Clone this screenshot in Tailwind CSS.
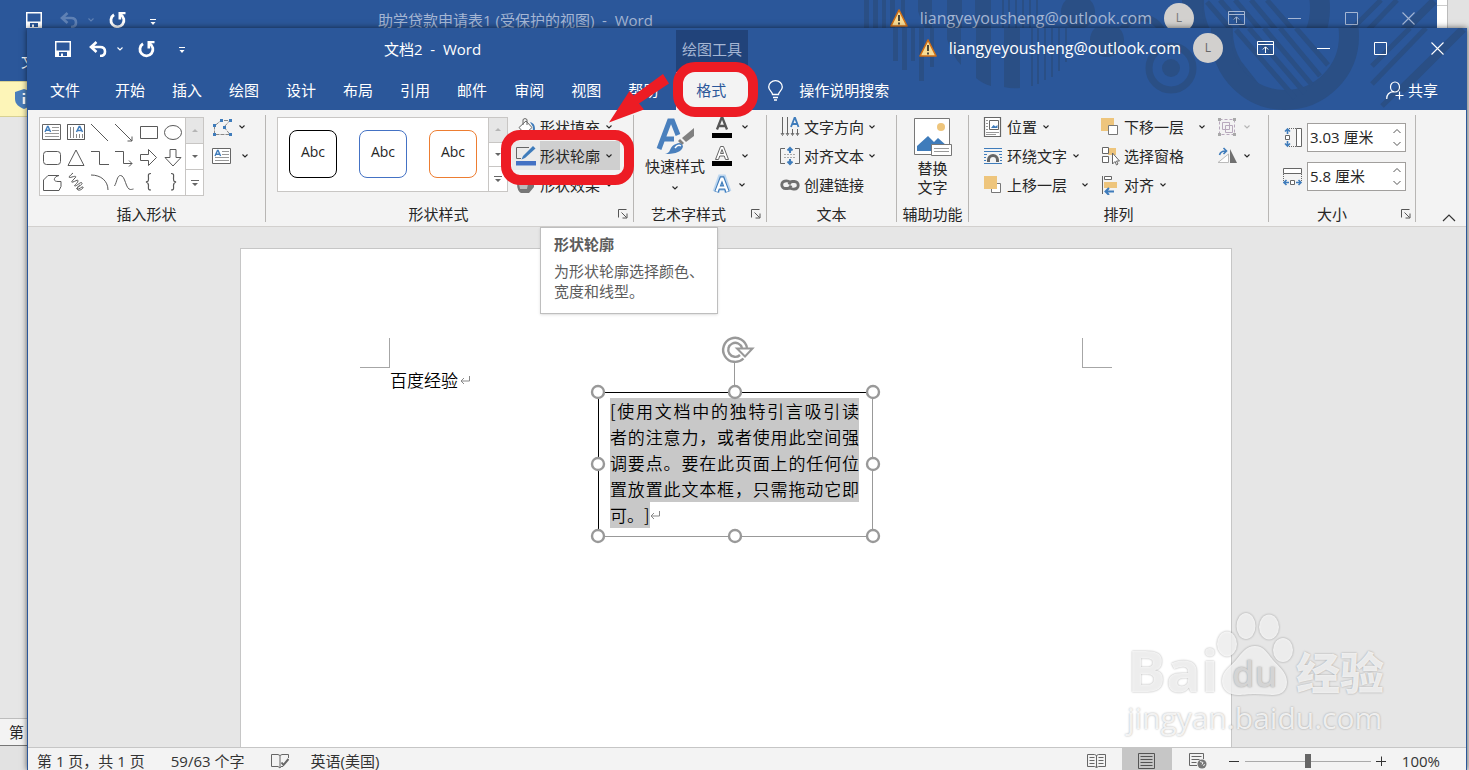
<!DOCTYPE html>
<html lang="zh-CN">
<head>
    <meta charset="utf-8">
    <title>文档2 - Word</title>
    <script src="https://cdn.jsdelivr.net/npm/@tailwindcss/browser@4"></script>
</head>
<body class="relative h-screen overflow-hidden bg-[#e2e2e2] font-['Open_Sans','Noto_Sans_CJK_SC',sans-serif] text-[15px] leading-5 text-[#262626]">

    <!-- shared icons -->
    <svg class="hidden">
        <symbol id="caret" viewBox="0 0 8 6"><path d="M1.500 1.500L4 4l2.500-2.500" fill="none" stroke="currentColor" stroke-width="1.100"/></symbol>
        <symbol id="save" viewBox="0 0 16 16"><path d="M0 0h16v16H0zM1.500 1.500v8h13v-8zM4 11v4h2v-2.500h2V15h4v-4z" fill="currentColor" fill-rule="evenodd"/></symbol>
        <symbol id="undo" viewBox="0 0 18 16"><path d="M7.500 1L2 6l5.500 5M2.500 6H11c3.500 0 5 2 5 4.500S14.500 15 11 15" fill="none" stroke="currentColor" stroke-width="2.600"/></symbol>
        <symbol id="redo" viewBox="0 0 17 17"><path d="M5 2.800A6.500 6.500 0 1 0 11.500 2.600" fill="none" stroke="currentColor" stroke-width="2.800"/><path d="M9.500 0H16.500V2.200H12.200V7.500H9.500z" fill="currentColor"/></symbol>
        <symbol id="qat" viewBox="0 0 7 7"><path d="M0 0h6v1H0zM.5 3h5L3 6z" fill="currentColor"/></symbol>
        <symbol id="warn" viewBox="0 0 18 18"><path d="M9 1L17 17H1z" fill="#f8dc95" stroke="#cf6f17" stroke-width="1.600" stroke-linejoin="round"/><path d="M9 6v6M9 13.500v2" stroke="#222" stroke-width="1.600"/></symbol>
        <symbol id="ribbonopt" viewBox="0 0 17 14"><path d="M.5.5h16v13H.5zM.5 3.500h16M8.500 12V6M5.800 8.500l2.700-2.700 2.700 2.700" fill="none" stroke="currentColor"/></symbol>
        <symbol id="min" viewBox="0 0 13 13"><path d="M0 6.500h13" stroke="currentColor"/></symbol>
        <symbol id="max" viewBox="0 0 13 13"><path d="M.5.5h12v12H.5z" fill="none" stroke="currentColor"/></symbol>
        <symbol id="close" viewBox="0 0 13 13"><path d="M.5.5l12 12M12.500.5l-12 12" stroke="currentColor" stroke-width="1.100"/></symbol>
        <symbol id="launcher" viewBox="0 0 10 10"><path d="M.5 8.500v-8h8M3.500 3.500l5 5M9 4.500v4.500H4.500" fill="none" stroke="#555"/></symbol>
        <symbol id="textbox" viewBox="0 0 20 20"><path d="M.5 2.500h18v15H.5z" fill="#fff" stroke="#666"/><path d="M10 5.500h7M10 8.500h7M3 11.500h14M3 14.500h14" stroke="#999"/><path d="M3 10L5.500 4.500h.6L8.600 10M4 8.300h3.700" fill="none" stroke="#3f7cbb" stroke-width="1.400"/></symbol>
        <symbol id="pattern" viewBox="866 28 600 82">
            <g fill="#2a4f85">
                <path d="M893 28h5v33h-5zM902 28h5v42h-5zM911 28h4v33h-4zM919 28h5v53h-5zM930 28h4v39h-4z"/>
                <path d="M947 28h14v37q-9-9-14-26zM976 28h15v58q-8-2-15-8zM1004 28h16v60q-8 1-16-1zM1031 28h2v58h-2zM1037 28h2v56h-2zM1044 28h2v52h-2zM1051 28h2v49h-2zM1058 28h2v43h-2zM1065 28h2v34h-2z"/>
                <circle cx="1107" cy="40" r="17"/>
                <circle cx="1171" cy="68" r="9"/>
                <path d="M1211 28h22q-1 18 8 33l36 46q-40-4-58-39-9-19-8-40z"/>
            </g>
            <circle cx="1171" cy="68" r="22" fill="none" stroke="#2a4f85" stroke-width="7"/>
            <circle cx="1285" cy="36" r="64" fill="none" stroke="#2a4f85" stroke-width="20"/>
            <path d="M1236 30l59 68M1249 28l56 65M1264 28l48 57M1280 28l40 48M1296 28l32 37M1372 84l54-56M1372 66l38-38M1382 106l80-78M1402 92l62-62" stroke="#2a4f85" stroke-width="5"/>
        </symbol>
    </svg>

    <!-- window behind -->
    <div class="absolute top-0 right-[21px] h-7 w-3 border-r border-[#bbb] bg-white"><div class="mt-[5px] h-px bg-[#ccc]"></div></div>
    <section class="absolute top-0 bottom-6 -left-0.5 right-8 flex flex-col border-b border-[#777] bg-[#e6e6e6]">
        <header class="relative h-[81px] bg-[#2b579a] text-[#a5b6d3]">
            <svg class="absolute top-0 right-0 h-[82px] w-[600px]"><use href="#pattern"/></svg>
            <div class="relative flex h-10 items-center">
                <svg class="ml-7 h-4 w-4 text-white"><use href="#save"/></svg>
                <svg class="ml-[18px] h-4 w-[18px] text-[#5f81b4]"><use href="#undo"/></svg>
                <svg class="ml-[9px] h-1.5 w-2 text-[#5f81b4]"><use href="#caret"/></svg>
                <svg class="ml-3.5 h-[17px] w-[17px] text-white"><use href="#redo"/></svg>
                <svg class="mt-1 ml-6 h-[7px] w-[7px] text-white"><use href="#qat"/></svg>
                <p class="ml-[221px] whitespace-pre">助学贷款申请表1 (受保护的视图)  -  Word</p>
                <div class="ml-auto flex items-center pb-1">
                    <svg class="mr-3 h-[18px] w-[18px]"><use href="#warn"/></svg>
                    <span class="text-base">liangyeyousheng@outlook.com</span>
                    <span class="ml-3 flex h-[30px] w-[30px] items-center justify-center rounded-full bg-[#d2d0ce] text-xs text-[#777]">L</span>
                    <svg class="ml-[34px] h-3.5 w-[17px]"><use href="#ribbonopt"/></svg>
                    <svg class="ml-[43px] h-[13px] w-[13px]"><use href="#min"/></svg>
                    <svg class="ml-11 h-[13px] w-[13px]"><use href="#max"/></svg>
                    <svg class="ml-11 mr-[22px] h-[13px] w-[13px]"><use href="#close"/></svg>
                </div>
            </div>
            <p class="relative mt-[11px] ml-[23px] text-white">文件</p>
        </header>
        <div class="flex h-9 items-center border-y border-[#d8d193] bg-[#fdf5b8] pl-4">
            <svg class="h-5 w-5" viewBox="0 0 20 20"><path d="M10 0l9 3v7c0 5-4 8-9 10-5-2-9-5-9-10V3z" fill="#4a7ebb"/><path d="M10 4v2M10 8v7" stroke="#fff" stroke-width="2.500"/></svg>
        </div>
        <p class="mt-auto h-[27px] border-t border-[#bdbdbd] bg-[#f3f3f3] pt-[3px] pl-[11px]">第</p>
    </section>

    <!-- front window -->
    <main class="absolute top-7 right-0.5 bottom-0 left-[27px] flex flex-col border-x border-[#2b579a] bg-[#e6e6e6] shadow-[0_0_6px_rgba(0,0,0,0.6)]">
        <header class="relative bg-[#2b579a] text-white">
            <svg class="absolute top-0 right-0 h-[82px] w-[600px]"><use href="#pattern"/></svg>
            <div class="relative flex h-11 items-center">
                <button aria-label="保存" class="ml-[27px] pb-0.5"><svg class="h-4 w-4"><use href="#save"/></svg></button>
                <button aria-label="撤消" class="ml-[18px] flex items-center pb-0.5"><svg class="h-4 w-[18px]"><use href="#undo"/></svg><svg class="ml-[9px] h-1.5 w-2"><use href="#caret"/></svg></button>
                <button aria-label="重复" class="ml-3.5 pb-0.5"><svg class="h-[17px] w-[17px]"><use href="#redo"/></svg></button>
                <button aria-label="自定义快速访问工具栏" class="ml-6"><svg class="h-[7px] w-[7px]"><use href="#qat"/></svg></button>
                <h1 class="ml-[198px] w-[292px] pb-0.5 whitespace-pre">文档2  -  Word</h1>
                <p class="mt-0.5 flex h-[42px] w-[72px] items-center justify-center bg-[#21437a] pb-1 text-[#a5b6d3]">绘图工具</p>
                <div class="ml-auto flex items-center pb-1">
                    <svg class="mr-3 h-[18px] w-[18px]"><use href="#warn"/></svg>
                    <span class="text-base">liangyeyousheng@outlook.com</span>
                    <span class="ml-3 flex h-[30px] w-[30px] items-center justify-center rounded-full bg-[#d2d0ce] text-xs text-[#666]">L</span>
                    <button aria-label="功能区显示选项" class="ml-[34px]"><svg class="h-3.5 w-[17px]"><use href="#ribbonopt"/></svg></button>
                    <button aria-label="最小化" class="ml-[43px]"><svg class="h-[13px] w-[13px]"><use href="#min"/></svg></button>
                    <button aria-label="最大化" class="ml-11"><svg class="h-[13px] w-[13px]"><use href="#max"/></svg></button>
                    <button aria-label="关闭" class="ml-11 mr-[22px]"><svg class="h-[13px] w-[13px]"><use href="#close"/></svg></button>
                </div>
            </div>
            <nav class="relative flex h-[38px] items-center [&>*]:h-full [&_button]:pb-0.5">
                <button class="mr-[35px] ml-[22px]">文件</button>
                <div class="flex gap-[27px]">
                    <button>开始</button>
                    <button>插入</button>
                    <button>绘图</button>
                    <button>设计</button>
                    <button>布局</button>
                    <button>引用</button>
                    <button>邮件</button>
                    <button>审阅</button>
                    <button>视图</button>
                    <button>帮助</button>
                </div>
                <button class="ml-[18px] w-[72px] bg-[#f3f3f3] pr-0.5 text-[#2b579a]">格式</button>
                <button class="ml-5 flex items-center gap-4">
                    <svg class="h-[21px] w-[15px]" viewBox="0 0 15 21" fill="none" stroke="currentColor" stroke-width="1.300"><path d="M4.500 14.500c0-3-3.800-4-3.800-7.500a6.800 6.300 0 0 1 13.600 0c0 3.500-3.800 4.500-3.800 7.500zM5 17.500h5M6 20h3"/></svg>
                    操作说明搜索
                </button>
                <button class="mr-7 ml-auto flex items-center gap-1">
                    <svg class="h-[19px] w-[18px]" viewBox="0 0 18 19" fill="none" stroke="currentColor" stroke-width="1.200"><path d="M4.500 6a4.500 5 0 1 1 9 0c0 3-2 5-4.500 5s-4.500-2-4.500-5zM.7 18c0-5 3-7 7-7.300M13.500 10.500v8M9.500 14.500h8"/></svg>
                    共享
                </button>
            </nav>
        </header>

        <!-- ribbon -->
        <div class="relative flex h-[117px] border-b border-[#d2d0ce] bg-[#f3f3f3] pt-0.5">
            <section class="flex w-[237px] flex-col">
                <div class="flex h-[91px] items-start pl-[11px]">
                    <div class="mt-[5px] flex h-[79px] border border-[#c8c6c4] bg-white">
                        <div class="grid w-[145px] grid-cols-6 pt-0.5 text-[#595959] [&>svg]:m-0.5 [&>svg]:h-5 [&>svg]:w-5 [&>svg]:fill-none [&>svg]:stroke-current">
                            <svg><use href="#textbox"/></svg>
                            <svg viewBox="0 0 20 20"><path d="M1.500 2.500h17v15h-17zM4.500 5v11M7.500 5v11M10.500 12v4M13.500 12v4M16.500 12v4" stroke="#888"/><path d="M1.500 2.500h17v15h-17z"/><path d="M10.500 10l2.700-5.500h.6l2.700 5.500M11.500 8.500h4" stroke="#3f7cbb" stroke-width="1.500"/></svg>
                            <svg viewBox="0 0 20 20"><path d="M1 2l17 17"/></svg>
                            <svg viewBox="0 0 20 20"><path d="M1 2l17 17M18 14.500V19h-4.500"/></svg>
                            <svg viewBox="0 0 20 20"><path d="M1.500 4.500h17v12h-17z"/></svg>
                            <svg viewBox="0 0 20 20"><ellipse cx="10" cy="10.500" rx="8.500" ry="7"/></svg>
                            <svg viewBox="0 0 20 20"><rect x="1.500" y="4.500" width="17" height="13" rx="3"/></svg>
                            <svg viewBox="0 0 20 20"><path d="M10 3l8 15.500H2z"/></svg>
                            <svg viewBox="0 0 20 20"><path d="M1 4.500h8.500v13H19"/></svg>
                            <svg viewBox="0 0 20 20"><path d="M1 4.500h8.500v12H18M15 13.500l3 3-3 3"/></svg>
                            <svg viewBox="0 0 20 20"><path d="M1.500 7.500h8v-5l8 8-8 8v-5h-8z"/></svg>
                            <svg viewBox="0 0 20 20"><path d="M7 2.500h6v8h5L10 19l-8-8.500h5z"/></svg>
                            <svg viewBox="0 0 20 20"><path d="M6 3.500h11c-5 1-7 6-1 6h3v5l-2 4H1.500V8z"/></svg>
                            <svg viewBox="0 0 20 20"><path d="M7 1c-6 5-4 5-1 4s5-1 3 1-5 5-2 4 5-3 5-1-5 5-3 5 6-5 7-3-7 5-5 6 5-3 6-2-3 4-5 3 0-4 2-5" /></svg>
                            <svg viewBox="0 0 20 20"><path d="M1 3c10 0 17 6 17 15"/></svg>
                            <svg viewBox="0 0 20 20"><path d="M.5 14C3 10 3 3.500 6.500 3.500c5 0 5 14 10 14 1.500 0 2.500-.5 3-.500"/></svg>
                            <svg viewBox="0 0 20 20"><path d="M12 1.500c-3.500 0-2.500 2-2.500 5s-.5 3-2.500 3.500c2 .5 2.500 1 2.500 3.500s-1 4.500 2.500 4.500" stroke-width="1.200"/></svg>
                            <svg viewBox="0 0 20 20"><path d="M8 1.500c3.500 0 2.500 2 2.500 5s.5 3 2.500 3.500c-2 .5-2.500 1-2.500 3.500s1 4.500-2.500 4.500" stroke-width="1.200"/></svg>
                        </div>
                        <div class="flex w-[18px] flex-col divide-y divide-[#c8c6c4] border-l border-[#c8c6c4] [&>button]:flex [&>button]:flex-1 [&>button]:items-center [&>button]:justify-center">
                            <button aria-label="上一行" class="bg-[#e6e6e6]"><svg class="h-[3px] w-1.5" viewBox="0 0 6 3"><path d="M0 3l3-3 3 3z" fill="#b5b5b5"/></svg></button>
                            <button aria-label="下一行"><svg class="h-[3px] w-1.5" viewBox="0 0 6 3"><path d="M0 0l3 3 3-3z" fill="#666"/></svg></button>
                            <button aria-label="其他形状"><svg class="h-1.5 w-2" viewBox="0 0 8 6"><path d="M0 0h8v1H0zM1 3l3 3 3-3z" fill="#666"/></svg></button>
                        </div>
                    </div>
                    <div class="ml-2 flex flex-col">
                        <button aria-label="编辑形状" class="flex h-[29px] items-center gap-1.5">
                            <svg class="h-5 w-5" viewBox="0 0 20 20"><path d="M2.500 17.500V9L9 3.500h9L12 10l6 7.500z" fill="none" stroke="#888" stroke-dasharray="4 1"/><path d="M8 2h3v3H8zM17 2h3v3h-3zM1 7h3v3H1zM11 9h3v3h-3zM1 16h3v3H1zM17 16h3v3h-3z" fill="#3f7cbb"/></svg>
                            <svg class="h-1.5 w-2"><use href="#caret"/></svg>
                        </button>
                        <button aria-label="文本框" class="flex h-[29px] items-center gap-[9px]">
                            <svg class="h-5 w-5"><use href="#textbox"/></svg>
                            <svg class="h-1.5 w-2"><use href="#caret"/></svg>
                        </button>
                    </div>
                </div>
                <h2 class="text-center leading-[22px]">插入形状</h2>
            </section>
            <div class="mt-[3px] mb-1 w-px bg-[#b8b6b4]"></div>

            <section class="flex w-[367px] flex-col">
                <div class="flex h-[91px] items-start pl-[11px]">
                    <div class="mt-[5px] flex h-[75px] border border-[#c8c6c4] bg-white">
                        <div class="flex items-start gap-[22px] px-[11px] pt-3 [&>button]:h-12 [&>button]:w-12 [&>button]:rounded-lg [&>button]:border [&>button]:pb-1 [&>button]:text-sm">
                            <button class="border-black">Abc</button>
                            <button class="border-[#4472c4]">Abc</button>
                            <button class="border-[#ed7d31]">Abc</button>
                        </div>
                        <div class="flex w-[19px] flex-col divide-y divide-[#c8c6c4] border-l border-[#c8c6c4] [&>button]:flex [&>button]:flex-1 [&>button]:items-center [&>button]:justify-center">
                            <button aria-label="上一行样式" class="bg-[#e6e6e6]"><svg class="h-[3px] w-1.5" viewBox="0 0 6 3"><path d="M0 3l3-3 3 3z" fill="#b5b5b5"/></svg></button>
                            <button aria-label="下一行样式"><svg class="h-[3px] w-1.5" viewBox="0 0 6 3"><path d="M0 0l3 3 3-3z" fill="#666"/></svg></button>
                            <button aria-label="其他样式"><svg class="h-1.5 w-2" viewBox="0 0 8 6"><path d="M0 0h8v1H0zM1 3l3 3 3-3z" fill="#666"/></svg></button>
                        </div>
                    </div>
                    <div class="ml-1 flex flex-col [&>button]:flex [&>button]:h-[29px] [&>button]:w-[108px] [&>button]:items-center">
                        <button>
                            <svg class="mx-1 h-5 w-5" viewBox="0 0 20 20"><path d="M3 10.500L10 4l6 6.500-7 6.500z" fill="#fff" stroke="#666"/><path d="M7 8V2.500q2-2 4 0V8" fill="none" stroke="#666"/><path d="M14 5c4 1 6 4 4.500 11-1.500-1-2-3-1.500-6z" fill="#3f7cbb"/></svg>
                            形状填充<svg class="ml-[5px] h-1.5 w-2"><use href="#caret"/></svg>
                        </button>
                        <button class="bg-[#cfcfcf]">
                            <span class="flex h-full items-center bg-[#ebebeb] px-1"><svg class="h-5 w-5" viewBox="0 0 20 20"><path d="M13 1.500H.5v11H5" fill="none" stroke="#666"/><path d="M17 0l2.500 2.500L9 12l-3.500 1.500L7 10z" fill="#3f7cbb"/><path d="M0 15h20v4.500H0z" fill="#4472c4"/></svg></span>
                            形状轮廓<svg class="ml-[5px] h-1.5 w-2"><use href="#caret"/></svg>
                        </button>
                        <button>
                            <svg class="mx-1 h-5 w-5" viewBox="0 0 20 20"><path d="M2 7l5-4h10l-3 5z" fill="#fff" stroke="#777"/><path d="M1 8h10l7-4v8l-5 6H5q-4-2-4-10z" fill="#777"/><path d="M3 9h9l-1 5H4z" fill="#bbb"/></svg>
                            形状效果<svg class="ml-[5px] h-1.5 w-2"><use href="#caret"/></svg>
                        </button>
                    </div>
                </div>
                <div class="flex items-center pr-[5px] pl-[15px]">
                    <h2 class="flex-1 pr-[22px] text-center leading-[22px]">形状样式</h2>
                    <button aria-label="设置形状格式"><svg class="h-2.5 w-2.5"><use href="#launcher"/></svg></button>
                </div>
            </section>
            <div class="mt-[3px] mb-1 w-px bg-[#b8b6b4]"></div>

            <section class="flex w-[132px] flex-col">
                <div class="flex h-[91px] items-start pl-[11px]">
                    <button class="flex w-[60px] flex-col items-center pt-1">
                        <svg class="h-10 w-10" viewBox="0 0 40 40"><path d="M4 33L14.500 5h3L23 19M9 23h10" fill="none" stroke="#4a80bd" stroke-width="5"/><path d="M39 12v8l-8 6-4-4z" fill="#808080"/><path d="M25 23l4 4-2 2-4-4z" fill="#808080"/><path d="M21 28q5-3 7 2-1 8-18 8 4-1 5-4 2-5 6-6z" fill="#4a80bd"/><path d="M20 32q3-4 6-2" fill="none" stroke="#fff" stroke-width="1.500"/></svg>
                        <span>快速样式</span>
                        <svg class="mt-[9px] h-1.5 w-2"><use href="#caret"/></svg>
                    </button>
                    <div class="ml-[7px] flex flex-col [&>button]:flex [&>button]:h-[29px] [&>button]:items-center">
                        <button aria-label="文本填充" class="gap-[9px]">
                            <svg class="h-[22px] w-5" viewBox="0 0 20 22"><path d="M5 13.500L9.500 2h1L15 13.500M6.500 10h7" fill="none" stroke="#555" stroke-width="2.300"/><path d="M0 17h20v5H0z"/></svg>
                            <svg class="h-1.5 w-2"><use href="#caret"/></svg>
                        </button>
                        <button aria-label="文本轮廓" class="gap-[9px]">
                            <svg class="h-[22px] w-5" viewBox="0 0 20 22"><path d="M3.500 14.500L8.500 1.500h3l5 13h-3l-1.200-3.500H7.700l-1.200 3.500zM8.500 8.500h3L10 4.500z" fill="#fff" stroke="#666"/><path d="M0 16h20v5H0z"/></svg>
                            <svg class="h-1.5 w-2"><use href="#caret"/></svg>
                        </button>
                        <button aria-label="文本效果" class="gap-1.5">
                            <svg class="h-[22px] w-5" viewBox="0 0 20 22"><path d="M4 18L9 4h2l5 14M6 13.500h8" fill="none" stroke="#bcd6ef" stroke-width="7"/><path d="M4.500 18L9.500 4.500h1L15.500 18M6 13.500h8" fill="none" stroke="#3f7cbb" stroke-width="4.600"/><path d="M4.500 17.500L9.500 4.500h1L15.500 17.500M6 13.500h8" fill="none" stroke="#fff" stroke-width="2.200"/></svg>
                            <svg class="h-1.5 w-2"><use href="#caret"/></svg>
                        </button>
                    </div>
                </div>
                <div class="flex items-center pr-[5px]">
                    <h2 class="flex-1 pr-2 text-center leading-[22px]">艺术字样式</h2>
                    <button aria-label="设置文本效果格式"><svg class="h-2.5 w-2.5"><use href="#launcher"/></svg></button>
                </div>
            </section>
            <div class="mt-[3px] mb-1 w-px bg-[#b8b6b4]"></div>

            <section class="flex w-[129px] flex-col">
                <div class="flex h-[91px] flex-col pl-[13px] [&>button]:flex [&>button]:h-[29px] [&>button]:items-center [&>button]:gap-1">
                    <button>
                        <svg class="h-5 w-5" viewBox="0 0 20 20" fill="none" stroke="#666"><path d="M2.500 0v17M7.500 0v17M12.500 12v5.500M17.500 12v5.500M1 16l1.500 2.500L4 16M6 16l1.500 2.500L9 16M11 16l1.500 2.500L14 16M16 16l1.500 2.500L19 16"/><path d="M11 10l3.500-9h.6l3.400 9M12 7h5.500" stroke="#3f7cbb" stroke-width="1.800"/></svg>
                        文字方向<svg class="h-1.5 w-2"><use href="#caret"/></svg>
                    </button>
                    <button>
                        <svg class="h-5 w-5" viewBox="0 0 20 20" fill="none" stroke="#666"><path d="M5 2.500H.5v15H5M15 2.500h4.500v15H15"/><path d="M4 8.500h12M4 11.500h12" stroke="#aaa" stroke-dasharray="2 1"/><path d="M10 7V2.500M7.500 4.500L10 2l2.500 2.500M10 13v4.500M7.500 15.500L10 18l2.500-2.500" stroke="#3f7cbb" stroke-width="2"/></svg>
                        对齐文本<svg class="h-1.5 w-2"><use href="#caret"/></svg>
                    </button>
                    <button>
                        <svg class="h-5 w-5" viewBox="0 0 20 20" fill="none" stroke="#707070" stroke-width="2.800"><path d="M10.500 7.500Q8 5.500 5.500 6a3.700 3.700 0 0 0 0 7.500h2Q10 13.500 11 10.500M9.500 12.500q2.500 2 5 1.500a3.700 3.700 0 0 0 0-7.500h-2Q10 6.500 9 9.500"/></svg>
                        创建链接
                    </button>
                </div>
                <h2 class="text-center leading-[22px]">文本</h2>
            </section>
            <div class="mt-[3px] mb-1 w-px bg-[#b8b6b4]"></div>

            <section class="flex w-[71px] flex-col">
                <button class="flex h-[91px] flex-col items-center justify-start pt-1.5 leading-[19px]">
                    <svg class="mb-0.5 h-[39px] w-[39px]" viewBox="0 0 39 39"><path d="M1.500.5h35v36h-35z" fill="#fff" stroke="#777"/><circle cx="28" cy="9" r="4" fill="#eec57c"/><path d="M4 33V28l11-10 6 6 4-4 9 8v5z" fill="#3f7cbb"/><path d="M18.500 26.500h20v11h-20z" fill="#fff" stroke="#777"/><path d="M21 30.500h15M21 33.500h15" stroke="#999"/></svg>
                    <span>替换</span>
                    <span>文字</span>
                </button>
                <h2 class="text-center leading-[22px]">辅助功能</h2>
            </section>
            <div class="mt-[3px] mb-1 w-px bg-[#b8b6b4]"></div>

            <section class="flex w-[299px] flex-col">
                <div class="flex h-[91px] pl-[14px]">
                    <div class="flex w-[117px] flex-col [&>button]:flex [&>button]:h-[29px] [&>button]:items-center">
                        <button>
                            <svg class="mr-1 h-5 w-5" viewBox="0 0 20 20" fill="none" stroke="#666"><path d="M1.500.5h16v19h-16z" fill="#fff" stroke-width="1.200"/><path d="M3 3.500h2M3 6.500h2M3 9.500h2M3 12.500h2M3 15.500h13M3 17.500h10" stroke="#999"/><path d="M6.500 3.500h9v9h-9z"/><path d="M8 11l2.500-3 2 1.500L14.500 8v3z" fill="#3f7cbb" stroke="none"/></svg>
                            位置<svg class="ml-[5px] h-1.5 w-2"><use href="#caret"/></svg>
                        </button>
                        <button>
                            <svg class="mr-1 h-5 w-5" viewBox="0 0 20 20" fill="none" stroke="#3f7cbb"><path d="M1 2.500h18M1 5.500h18M1 8.500h3M16 8.500h3M1 11.500h2M17 11.500h2M1 14.500h2M17 14.500h2M1 17.500h18"/><path d="M5.500 16v-2a4.500 4.500 0 0 1 9 0v2" stroke="#666" stroke-width="3"/></svg>
                            环绕文字<svg class="ml-[5px] h-1.5 w-2"><use href="#caret"/></svg>
                        </button>
                        <button>
                            <svg class="mr-1 h-5 w-5" viewBox="0 0 20 20"><path d="M8.500 8.500h9v9h-9z" fill="#fff" stroke="#777"/><path d="M1 1h13v13H1z" fill="#eec57c"/></svg>
                            上移一层<svg class="ml-3.5 h-1.5 w-2"><use href="#caret"/></svg>
                        </button>
                    </div>
                    <div class="flex w-[117px] flex-col [&>button]:flex [&>button]:h-[29px] [&>button]:items-center">
                        <button>
                            <svg class="mr-1 h-5 w-5" viewBox="0 0 20 20"><path d="M1 1h13v13H1z" fill="#eec57c"/><path d="M8.500 8.500h9v9h-9z" fill="#fff" stroke="#777"/></svg>
                            下移一层<svg class="ml-3.5 h-1.5 w-2"><use href="#caret"/></svg>
                        </button>
                        <button>
                            <svg class="mr-1 h-5 w-5" viewBox="0 0 20 20"><path d="M8 2h8v7H8z" fill="#eec57c"/><path d="M2.500 1.500h6v6h-6zM2.500 10.500h6v6h-6z" fill="#fff" stroke="#666"/><path d="M12.500 7v11l2.500-2.500 1.500 3.500 1.500-1-1.500-3h3z" fill="#fff" stroke="#666"/></svg>
                            选择窗格
                        </button>
                        <button>
                            <svg class="mr-1 h-5 w-5" viewBox="0 0 20 20"><path d="M2.500 1v18" stroke="#666"/><path d="M4.500 1.500h7v3h-7z" fill="#fff" stroke="#666"/><path d="M4 7h13v6H4z" fill="#eec57c"/><path d="M14 16.500H6M9 13l-3.500 3.500L9 20" fill="none" stroke="#3f7cbb" stroke-width="2"/></svg>
                            对齐<svg class="ml-[5px] h-1.5 w-2"><use href="#caret"/></svg>
                        </button>
                    </div>
                    <div class="flex flex-col [&>button]:flex [&>button]:h-[29px] [&>button]:items-center [&>button]:gap-1.5">
                        <button disabled aria-label="组合" class="text-[#b5b5b5]">
                            <svg class="h-5 w-5" viewBox="0 0 20 20" fill="none" stroke="#b8a9bd"><path d="M5.500 5.500h7v7h-7zM8.500 8.500h7v7h-7z"/><path d="M2.500 2.500h15v15h-15z" stroke-dasharray="3 2"/><path d="M1 1h3v3H1zM16 1h3v3h-3zM1 16h3v3H1zM16 16h3v3h-3z" fill="#a9a9a9" stroke="none"/></svg>
                            <svg class="h-1.5 w-2"><use href="#caret"/></svg>
                        </button>
                        <button aria-label="旋转">
                            <svg class="h-5 w-5" viewBox="0 0 20 20"><path d="M1 16.500h10.500V8z" fill="#fff" stroke="#bbb"/><path d="M13 3v14h7z" fill="#707070"/><path d="M2.500 9q1-4 6-4M6.500 2l3 3-3 3" fill="none" stroke="#3f7cbb" stroke-width="1.600"/></svg>
                            <svg class="h-1.5 w-2"><use href="#caret"/></svg>
                        </button>
                    </div>
                </div>
                <h2 class="text-center leading-[22px]">排列</h2>
            </section>
            <div class="mt-[3px] mb-1 w-px bg-[#b8b6b4]"></div>

            <section class="flex w-[146px] flex-col">
                <div class="flex h-[91px] flex-col gap-2.5 pt-[11px] pl-[14px]">
                    <div class="flex items-center gap-1">
                        <label for="shapeHeight" aria-label="高度"><svg class="h-5 w-5" viewBox="0 0 20 20" fill="none" stroke="#666"><path d="M13.500.5h5v18h-5z" fill="#fff"/><path d="M2.500 7.500h4v4h-4z" fill="#fff"/><path d="M6 .5h7M6 18.500h7" stroke-dasharray="1 1"/><path d="M4.500 6V1.500M2 3.500L4.500 1 7 3.500M4.500 13v4.500M2 15.500L4.500 18 7 15.500" stroke="#3f7cbb" stroke-width="1.600"/></svg></label>
                        <div class="flex h-[29px] w-[99px] border border-[#a19f9d] bg-white">
                            <input id="shapeHeight" type="text" value="3.03 厘米" class="w-20 pb-0.5 pl-0.5 outline-none">
                            <div class="flex flex-1 flex-col items-center justify-center gap-[7px]">
                                <button aria-label="增加高度"><svg class="h-1.5 w-2.5" viewBox="0 0 10 6"><path d="M1.500 5L5 1.500 8.500 5" fill="none" stroke="#555"/></svg></button>
                                <button aria-label="减少高度"><svg class="h-1.5 w-2.5" viewBox="0 0 10 6"><path d="M1.500 1L5 4.500 8.500 1" fill="none" stroke="#555"/></svg></button>
                            </div>
                        </div>
                    </div>
                    <div class="flex items-center gap-1">
                        <label for="shapeWidth" aria-label="宽度"><svg class="h-5 w-5" viewBox="0 0 20 20" fill="none" stroke="#666"><path d="M.5 1.500h18v5H.5z" fill="#fff"/><path d="M7.500 13.500h4v4h-4z" fill="#fff"/><path d="M.5 7v7M18.500 7v7" stroke-dasharray="1 1"/><path d="M6 15.500H1.500M3.500 13L1 15.500 3.500 18M13 15.500h4.500M15.500 13l2.500 2.500-2.500 2.500" stroke="#3f7cbb" stroke-width="1.600"/></svg></label>
                        <div class="flex h-[29px] w-[99px] border border-[#a19f9d] bg-white">
                            <input id="shapeWidth" type="text" value="5.8 厘米" class="w-20 pb-0.5 pl-0.5 outline-none">
                            <div class="flex flex-1 flex-col items-center justify-center gap-[7px]">
                                <button aria-label="增加宽度"><svg class="h-1.5 w-2.5" viewBox="0 0 10 6"><path d="M1.500 5L5 1.500 8.500 5" fill="none" stroke="#555"/></svg></button>
                                <button aria-label="减少宽度"><svg class="h-1.5 w-2.5" viewBox="0 0 10 6"><path d="M1.500 1L5 4.500 8.500 1" fill="none" stroke="#555"/></svg></button>
                            </div>
                        </div>
                    </div>
                </div>
                <div class="flex items-center pr-1">
                    <h2 class="flex-1 pr-1.5 text-center leading-[22px]">大小</h2>
                    <button aria-label="高级版式"><svg class="h-2.5 w-2.5"><use href="#launcher"/></svg></button>
                </div>
            </section>
            <div class="mt-[3px] mb-1 w-px bg-[#b8b6b4]"></div>
            <button aria-label="折叠功能区" class="mr-2.5 mb-1 ml-auto self-end"><svg class="h-2 w-3.5" viewBox="0 0 14 8"><path d="M1 7l6-6 6 6" fill="none" stroke="#333" stroke-width="1.200"/></svg></button>

            <div role="tooltip" class="absolute top-[117px] left-[512px] z-10 w-[178px] border border-[#bebebe] bg-white px-[13px] pt-1.5 pb-3 text-[#5c5c5c] shadow-sm">
                <p class="mb-[7px] font-bold">形状轮廓</p>
                <p>为形状轮廓选择颜色、宽度和线型。</p>
            </div>
        </div>

        <!-- document -->
        <div class="flex flex-1 justify-center overflow-hidden pt-[21px] pr-[22px]">
            <article class="relative w-[992px] border border-b-0 border-[#c6c6c6] bg-white px-[119px] pt-[89px] font-['Noto_Sans_CJK_SC',sans-serif] text-[17px] leading-[26px] font-[350] text-black">
                <div class="flex justify-between">
                    <div class="h-[30px] w-[30px] border-r border-b border-[#a6a6a6]"></div>
                    <div class="h-[30px] w-[30px] border-b border-l border-[#a6a6a6]"></div>
                </div>
                <p class="-mt-px flex items-center px-[30px]">百度经验<svg class="ml-0.5 h-2.5 w-[11px]" viewBox="0 0 11 10"><path d="M9.500 1v5H1M4 3L1 6l3 3" fill="none" stroke="#888"/></svg></p>

                <div class="absolute top-[143px] left-[357px] h-[145px] w-[275px] border border-t-black border-r-[#999] border-b-[#999] border-l-black pt-[5px] pl-[11px]">
                    <div class="w-[249px] [&>p]:h-[26px] [&>p]:bg-[#c8c8c8] [&>p]:[text-align-last:justify]">
                        <p>[使用文档中的独特引言吸引读</p>
                        <p>者的注意力，或者使用此空间强</p>
                        <p>调要点。要在此页面上的任何位</p>
                        <p>置放置此文本框，只需拖动它即</p>
                    </div>
                    <div class="flex items-center"><span class="bg-[#c8c8c8] [text-spacing-trim:space-all]">可。]</span><svg class="h-2.5 w-[11px]" viewBox="0 0 11 10"><path d="M9.500 1v5H1M4 3L1 6l3 3" fill="none" stroke="#888"/></svg></div>
                </div>
                <!-- selection handles -->
                <svg class="absolute top-[83px] left-[349px] h-[214px] w-[294px]" viewBox="0 0 294 214" fill="#fff" stroke="#999" stroke-width="2.400">
                    <path d="M144.500 30v24" stroke-width="1"/>
                    <circle cx="8" cy="60" r="6"/><circle cx="145" cy="60" r="6"/><circle cx="283" cy="60" r="6"/>
                    <circle cx="8" cy="132" r="6"/><circle cx="283" cy="132" r="6"/>
                    <circle cx="8" cy="204" r="6"/><circle cx="145" cy="204" r="6"/><circle cx="283" cy="204" r="6"/>
                    <path d="M153.500 26.500A12 12 0 1 1 157 16M150 23A7 7 0 1 1 152 16" fill="none"/>
                    <path d="M147 16.500h15.500l-7.500 8z" stroke-width="2"/>
                </svg>
            </article>
        </div>

        <!-- status bar -->
        <footer class="flex h-[23px] items-center border-t border-[#c6c6c6] bg-[#f3f3f3] pt-1 pl-[9px] text-[#333]">
            <span>第 1 页，共 1 页</span>
            <span class="ml-[26px]">59/63 个字</span>
            <button aria-label="校对" class="ml-[27px]"><svg class="h-4 w-[18px]" viewBox="0 0 18 16" fill="none" stroke="#666"><path d="M9 14V2.500L7 1.500H.5v12H7l2 1.500 1-1.500h2M9 2.500l2-1h6.500V5"/><path d="M10.500 9.500l2 2.500 5-6" stroke-width="2"/></svg></button>
            <span class="ml-[21px]">英语(美国)</span>
            <div class="ml-auto flex items-center">
                <button aria-label="阅读视图" class="mr-4"><svg class="h-4 w-[19px]" viewBox="0 0 19 16" fill="none" stroke="#666"><path d="M9.500 2.500v12M9.500 2.500l-2-1h-7v12h7l2 1 2-1h7v-12h-7zM2.500 4.500h5M2.500 7.500h5M2.500 10.500h5M11.500 4.500h5M11.500 7.500h5M11.500 10.500h5"/></svg></button>
                <button aria-label="页面视图" class="-mt-1 flex h-[22px] w-[50px] items-center justify-center bg-[#c6c6c6] pt-1"><svg class="h-4 w-[17px]" viewBox="0 0 17 16" fill="none" stroke="#555"><path d="M.5.5h16v15H.5zM2.500 3.500h12M2.500 6.500h12M2.500 9.500h12M2.500 12.500h12"/></svg></button>
                <button aria-label="Web 版式视图" class="ml-[17px]"><svg class="h-4 w-[18px]" viewBox="0 0 18 16" fill="none" stroke="#666"><path d="M8 12.500H.5V.5h14V6M2.500 3.500h10M2.500 6.500h8M2.500 9.500h5"/><circle cx="13" cy="11" r="4.500" fill="#777" stroke="none"/><path d="M11 8.500l3 1-1 2M14 12.500l2-1" stroke="#eee"/></svg></button>
                <button aria-label="缩小" class="ml-[22px]"><svg class="h-2.5 w-2.5" viewBox="0 0 10 10"><path d="M0 5.500h10" stroke="#333"/></svg></button>
                <input type="range" aria-label="缩放" value="50" class="ml-1.5 h-3.5 w-[126px] appearance-none bg-transparent bg-[linear-gradient(#aaa,#aaa)] bg-[length:100%_1px] bg-center bg-no-repeat [&::-webkit-slider-thumb]:h-3.5 [&::-webkit-slider-thumb]:w-1.5 [&::-webkit-slider-thumb]:appearance-none [&::-webkit-slider-thumb]:bg-[#666]">
                <button aria-label="放大" class="ml-[5px]"><svg class="h-2.5 w-2.5" viewBox="0 0 10 10"><path d="M0 5.500h10M5.500.5v10" stroke="#333"/></svg></button>
                <span class="mr-[26px] ml-4">100%</span>
            </div>
        </footer>
    </main>

    <!-- callouts -->
    <svg class="pointer-events-none absolute top-[60px] left-[500px] h-[130px] w-[260px]" viewBox="500 60 260 130">
        <g fill="none" stroke="#ed1c24" stroke-width="10">
            <rect x="678" y="67" width="75" height="45" rx="17"/>
            <rect x="506" y="135" width="123" height="45" rx="14"/>
        </g>
        <path d="M609 122.500L629.500 91l4 4.500L663 74l6 9.500-30 20 5 6z" fill="#ed1c24"/>
    </svg>

    <!-- watermark -->
    <div class="pointer-events-none absolute right-[80px] bottom-[28px] h-[130px] w-[262px] text-white/80 [text-shadow:0_0_2px_rgba(0,0,0,0.35)]">
        <span class="absolute top-8 left-0 text-[58px] leading-[52px] font-bold">Bai</span>
        <svg class="absolute top-0 left-[86px] h-[86px] w-[84px] drop-shadow-[0_0_1px_rgba(0,0,0,0.4)]" viewBox="0 0 84 86" fill="#fff" fill-opacity="0.8">
            <ellipse cx="14" cy="32" rx="10" ry="12.500"/><ellipse cx="33" cy="14" rx="9.500" ry="13"/><ellipse cx="56" cy="15" rx="10" ry="12.500"/><ellipse cx="70" cy="38" rx="10" ry="12"/>
            <path d="M42 34c9 0 13 8 18 14s14 12 14 22c0 9-6 13-14 13-7 0-11-1-18-1s-10 1-17 1c-9 0-16-5-16-14 0-10 9-15 14-21s10-14 19-14z"/>
        </svg>
        <span class="absolute top-[43px] left-[105px] text-[36px] leading-[38px] font-semibold text-[#d4d4d4]">du</span>
        <span class="absolute top-[39px] left-[169px] text-[44px] leading-[44px] font-black">经验</span>
        <span class="absolute top-[91px] left-0 text-[30px] leading-[30px]">jingyan.baidu.com</span>
    </div>
</body>
</html>
